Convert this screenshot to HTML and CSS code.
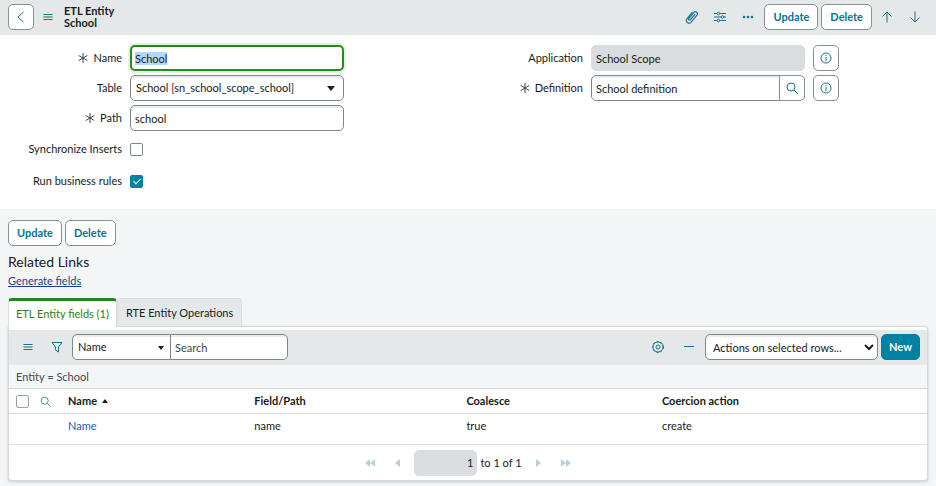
FILE: index.html
```html
<!DOCTYPE html>
<html lang="en">

<head>
  <meta charset="UTF-8">
  <meta name="viewport" content="width=device-width, initial-scale=1.0">
  <title>School | ETL Entity</title>
  <link rel="stylesheet" href="styles.css">
</head>

<body>
  <header class="form-header">
    <button class="btn btn-icon" type="button" aria-label="Back">
      <svg width="14" height="14" viewBox="0 0 14 14"><path d="M9.500 2 4 7l5.500 5" /></svg>
    </button>
    <button class="icon-btn menu-btn" type="button" aria-label="Form menu">
      <svg width="10" height="10" viewBox="0 0 10 10"><path d="M.5 2.500h9M.5 5h9M.5 7.500h9" /></svg>
    </button>
    <h1 class="form-title">ETL Entity<br>School</h1>
    <div class="header-icons">
      <button class="icon-btn" type="button" aria-label="Attachments">
        <svg width="14" height="14" viewBox="1 1 12 12"><path d="M9.700 4.500 5.500 9.400c-.7.800-2-.2-1.300-1.100L8.500 3.200c1.500-1.700 4.100.3 2.700 2.200l-4.900 5.900c-2 2.300-5.500-.4-3.700-2.800l4.700-5.600" /></svg>
      </button>
      <button class="icon-btn" type="button" aria-label="Personalize form">
        <svg width="14" height="14" viewBox="0 0 14 14"><path d="M1 3.500h3M7 3.500h6M1 7h7M11 7h2M1 10.500h3M7 10.500h6" /><circle cx="5.500" cy="3.500" r="1.300" /><circle cx="9.500" cy="7" r="1.300" /><circle cx="5.500" cy="10.500" r="1.300" /></svg>
      </button>
      <button class="icon-btn" type="button" aria-label="More options">
        <svg class="solid" width="14" height="14" viewBox="0 0 14 14"><circle cx="3" cy="7" r="1.300" /><circle cx="7" cy="7" r="1.300" /><circle cx="11" cy="7" r="1.300" /></svg>
      </button>
    </div>
    <div class="btn-group">
      <button class="btn" type="button">Update</button>
      <button class="btn" type="button">Delete</button>
    </div>
    <div class="header-nav">
      <button class="icon-btn" type="button" aria-label="Previous record">
        <svg width="14" height="14" viewBox="0 0 14 14"><path d="M7 12.500V2M2.500 6.500 7 2l4.500 4.500" /></svg>
      </button>
      <button class="icon-btn" type="button" aria-label="Next record">
        <svg width="14" height="14" viewBox="0 0 14 14"><path d="M7 1.500V12M2.500 7.500 7 12l4.500-4.500" /></svg>
      </button>
    </div>
  </header>

  <form class="record-form">
    <div class="form-column">
      <div class="field">
        <label for="name"><svg class="required" width="10" height="10" viewBox="0 0 10 10"><path d="M5 0v10M.7 2.500l8.600 5M9.300 2.500l-8.600 5" /></svg>Name</label>
        <input class="control" type="text" id="name" value="School" autofocus>
      </div>
      <div class="field">
        <label for="table">Table</label>
        <div class="select-wrap">
          <select class="control" id="table">
            <option>School [sn_school_scope_school]</option>
          </select>
        </div>
      </div>
      <div class="field">
        <label for="path"><svg class="required" width="10" height="10" viewBox="0 0 10 10"><path d="M5 0v10M.7 2.500l8.600 5M9.300 2.500l-8.600 5" /></svg>Path</label>
        <input class="control" type="text" id="path" value="school">
      </div>
      <div class="field field-check">
        <label for="sync">Synchronize Inserts</label>
        <input class="checkbox" type="checkbox" id="sync">
      </div>
      <div class="field field-check">
        <label for="rules">Run business rules</label>
        <input class="checkbox" type="checkbox" id="rules" checked>
      </div>
    </div>
    <div class="form-column">
      <div class="field">
        <label for="application">Application</label>
        <input class="control" type="text" id="application" value="School Scope" readonly>
        <button class="btn btn-icon" type="button" aria-label="Preview application">
          <svg width="14" height="14" viewBox="0 0 14 14"><circle cx="7" cy="7" r="5" /><path d="M7 6v4M7 4v1" /></svg>
        </button>
      </div>
      <div class="field">
        <label for="definition"><svg class="required" width="10" height="10" viewBox="0 0 10 10"><path d="M5 0v10M.7 2.500l8.600 5M9.300 2.500l-8.600 5" /></svg>Definition</label>
        <div class="lookup">
          <input class="control" type="text" id="definition" value="School definition">
          <button class="btn btn-icon" type="button" aria-label="Look up definition">
            <svg width="14" height="14" viewBox="0 0 14 14"><circle cx="6" cy="6" r="4" /><path d="m9 9 4 4" /></svg>
          </button>
        </div>
        <button class="btn btn-icon" type="button" aria-label="Preview definition">
          <svg width="14" height="14" viewBox="0 0 14 14"><circle cx="7" cy="7" r="5" /><path d="M7 6v4M7 4v1" /></svg>
        </button>
      </div>
    </div>
  </form>

  <main class="related">
    <div class="btn-group">
      <button class="btn" type="button">Update</button>
      <button class="btn" type="button">Delete</button>
    </div>
    <h2 class="related-title">Related Links</h2>
    <a class="related-link" href="#">Generate fields</a>

    <div class="tabs" role="tablist">
      <button class="tab active" type="button" role="tab" aria-selected="true">ETL Entity fields (1)</button>
      <button class="tab" type="button" role="tab" aria-selected="false">RTE Entity Operations</button>
    </div>

    <section class="list-panel">
      <div class="list-toolbar">
        <button class="icon-btn" type="button" aria-label="List menu">
          <svg width="10" height="10" viewBox="0 0 10 10"><path d="M.5 2.500h9M.5 5h9M.5 7.500h9" /></svg>
        </button>
        <button class="icon-btn" type="button" aria-label="Filter">
          <svg width="12" height="12" viewBox="0 0 12 12"><path d="M1 1.500h10L7.500 6v5L4.500 9V6z" /></svg>
        </button>
        <div class="search-group">
          <div class="select-wrap">
            <select class="control" aria-label="Search field">
              <option>Name</option>
            </select>
          </div>
          <input class="control" type="text" placeholder="Search" aria-label="Search">
        </div>
        <div class="toolbar-icons">
          <button class="icon-btn" type="button" aria-label="List settings">
            <svg width="14" height="14" viewBox="0 0 14 14"><circle cx="7" cy="7" r="5" /><circle class="teeth" cx="7" cy="7" r="5.500" /><circle cx="7" cy="7" r="2" /></svg>
          </button>
          <button class="icon-btn" type="button" aria-label="Collapse list">
            <svg width="12" height="12" viewBox="0 0 12 12"><path d="M1 5.500h10" /></svg>
          </button>
        </div>
        <select class="control actions" aria-label="Actions">
          <option>Actions on selected rows...</option>
        </select>
        <button class="btn btn-primary" type="button">New</button>
      </div>
      <div class="breadcrumb">Entity = School</div>
      <table class="list">
        <thead>
          <tr>
            <th class="col-check"><input class="checkbox" type="checkbox" aria-label="Select all rows"></th>
            <th class="col-search">
              <button class="icon-btn" type="button" aria-label="Search columns">
                <svg width="11" height="11" viewBox="0 0 14 14"><circle cx="6" cy="6" r="4.500" /><path d="m9.500 9.500 4 4" /></svg>
              </button>
            </th>
            <th class="col-name">Name<span class="sort-asc"></span></th>
            <th class="col-path">Field/Path</th>
            <th class="col-coalesce">Coalesce</th>
            <th>Coercion action</th>
          </tr>
        </thead>
        <tbody>
          <tr>
            <td></td>
            <td></td>
            <td><a href="#">Name</a></td>
            <td>name</td>
            <td>true</td>
            <td>create</td>
          </tr>
        </tbody>
      </table>
      <div class="pagination">
        <button class="page-btn" type="button" aria-label="First page" disabled>
          <svg width="10" height="8" viewBox="0 0 10 8"><path d="M5 0v8L0 4zM10 0v8L5 4z" /></svg>
        </button>
        <button class="page-btn" type="button" aria-label="Previous page" disabled>
          <svg width="5" height="8" viewBox="0 0 5 8"><path d="M5 0v8L0 4z" /></svg>
        </button>
        <div class="page-range">
          <input class="control" type="text" id="page" value="1" readonly>
          <label for="page">to 1 of 1</label>
        </div>
        <button class="page-btn" type="button" aria-label="Next page" disabled>
          <svg width="5" height="8" viewBox="0 0 5 8"><path d="M0 0v8l5-4z" /></svg>
        </button>
        <button class="page-btn" type="button" aria-label="Last page" disabled>
          <svg width="10" height="8" viewBox="0 0 10 8"><path d="M0 0v8l5-4zM5 0v8l5-4z" /></svg>
        </button>
      </div>
    </section>
  </main>

  <script>
    const nameInput = document.getElementById('name');
    nameInput.focus();
    nameInput.select();
  </script>
</body>

</html>
```

FILE: styles.css
```css
* {
  box-sizing: border-box;
}

body {
  margin: 0;
  background-color: #f4f5f7;
  color: #161b1c;
  font-family: Lato, sans-serif;
  font-size: 11px;
  line-height: 16px;
}

button,
input,
select {
  margin: 0;
  font: inherit;
  color: inherit;
}

button {
  cursor: pointer;
}

svg {
  display: block;
  fill: none;
  stroke: #17708d;
  stroke-width: 1;
}

svg.solid {
  fill: #17708d;
  stroke: none;
}

/* buttons */
.btn {
  height: 26px;
  padding: 0 8px;
  border: 1px solid #869093;
  border-radius: 5px;
  background-color: #fff;
  color: #0b718f;
  font-weight: bold;
}

.btn-icon {
  display: flex;
  align-items: center;
  justify-content: center;
  width: 26px;
  padding: 0;
}

.btn-primary {
  padding: 0 7px;
  border-color: #0080a3;
  background-color: #0080a3;
  color: #fff;
}

.btn-group {
  display: flex;
  gap: 3px;
}

.icon-btn {
  padding: 0;
  border: none;
  background: none;
}

/* header */
.form-header {
  display: flex;
  align-items: center;
  height: 35px;
  padding: 0 14px 1px 8px;
  background-color: #e4e8e9;
}

.menu-btn {
  margin: 0 11px 0 9px;
}

.form-title {
  margin: 0;
  font-size: 11px;
  line-height: 12px;
}

.header-icons,
.header-nav {
  display: flex;
  gap: 14px;
}

.header-icons {
  margin-left: auto;
  margin-right: 9px;
}

.header-nav {
  margin-left: 8px;
}

/* record form */
.record-form {
  display: grid;
  grid-template-columns: 1fr 1fr;
  padding: 10px 14px 14px 0;
  background-color: #fff;
}

.form-column {
  display: flex;
  flex-direction: column;
  gap: 4px;
}

.field {
  display: grid;
  grid-template-columns: 122fr 214fr 109fr;
  gap: 8px;
  align-items: center;
}

.field > label {
  display: flex;
  align-items: center;
  justify-content: flex-end;
  gap: 5px;
}

.required {
  stroke: #3c4547;
}

.field-check {
  height: 28px;
}

.control {
  width: 100%;
  height: 26px;
  padding: 0 4px;
  border: 1px solid #7c888a;
  border-radius: 5px;
  background-color: #fff;
  box-shadow: inset 0 2px 1px #e8eaeb;
}

.control:focus {
  border: 2px solid #278a1b;
  padding: 0 3px;
  outline: none;
  box-shadow: 0 0 0 2px #e3f0e2;
}

.control::selection {
  background-color: #b3d7fe;
  color: #161b1c;
}

.control::placeholder {
  color: #3f494b;
  opacity: 1;
}

.control:read-only:not(select) {
  border-color: #dadde0;
  background-color: #dadde0;
  box-shadow: none;
}

.select-wrap {
  position: relative;
}

.select-wrap select {
  appearance: none;
  padding: 0 5px;
}

.select-wrap::after {
  content: "";
  position: absolute;
  top: 11px;
  right: 9px;
  border: 4px solid transparent;
  border-top: 5px solid #161b1c;
  border-bottom: none;
  pointer-events: none;
}

.lookup {
  display: flex;
}

.lookup .control {
  border-radius: 5px 0 0 5px;
}

.lookup .btn {
  flex: none;
  margin-left: -1px;
  border-radius: 0 5px 5px 0;
}

.checkbox {
  appearance: none;
  display: block;
  width: 13px;
  height: 13px;
  border: 1px solid #7c888a;
  border-radius: 2px;
  background-color: #fff;
}

.checkbox:checked {
  border-color: #0080a3;
  background-color: #0080a3;
}

.checkbox:checked::after {
  content: "";
  display: block;
  width: 3px;
  height: 6px;
  margin: 1px 0 0 4px;
  border: solid #fff;
  border-width: 0 1px 1px 0;
  transform: rotate(45deg);
}

/* related links and lists */
.related {
  padding: 11px 8px 6px;
}

.related-title {
  margin: 7px 0 2px;
  font-size: 14px;
  font-weight: normal;
  line-height: 18px;
}

.related-link {
  display: inline-block;
  color: #1b3f8f;
}

.tabs {
  display: flex;
  align-items: flex-end;
  margin-top: 9px;
}

.tab {
  height: 28px;
  padding: 0 8px;
  border: 1px solid #dadddf;
  border-bottom: none;
  border-radius: 4px 4px 0 0;
  background-color: #e4e8e9;
}

.tab.active {
  position: relative;
  height: 29px;
  margin-bottom: -1px;
  padding: 0 7px;
  border-top: 3px solid #278224;
  background-color: #fff;
  color: #278224;
}

.list-panel {
  padding-top: 3px;
  border: 1px solid #d3d8da;
  border-radius: 0 4px 4px 4px;
  background-color: #fff;
  box-shadow: 0 1px 3px #c3c8ca;
}

.list-toolbar {
  display: flex;
  align-items: center;
  height: 35px;
  padding: 0 7px 1px 14px;
  background-color: #e4e8e9;
}

.list-toolbar .icon-btn + .icon-btn {
  margin-left: 18px;
}

.search-group {
  display: flex;
  width: 216px;
  margin-left: 9px;
}

.search-group .select-wrap {
  flex: none;
  width: 99px;
}

.search-group .select-wrap::after {
  top: 12px;
  right: 7px;
  border-width: 4px 3px 0;
}

.search-group select {
  border-radius: 5px 0 0 5px;
}

.search-group input {
  margin-left: -1px;
  border-radius: 0 5px 5px 0;
}

.toolbar-icons {
  display: flex;
  align-items: center;
  margin-left: auto;
  margin-right: 10px;
}

.teeth {
  stroke-dasharray: 2 2;
}

.actions {
  width: 173px;
  margin-right: 3px;
  padding: 0 3px;
}

.breadcrumb {
  padding: 4px 7px 3px;
  background-color: #f4f5f7;
  color: #3f494b;
}

.list {
  width: 100%;
  border-collapse: collapse;
  table-layout: fixed;
  text-align: left;
}

.list th {
  height: 25px;
  padding: 0 7px;
  border-top: 1px solid #d3d8da;
  border-bottom: 1px solid #d3d8da;
}

.list td {
  height: 31px;
  padding: 4px 7px;
  border-bottom: 1px solid #dfe3e4;
  vertical-align: top;
}

.list a {
  color: #1f56cc;
  text-decoration: none;
}

.list .checkbox {
  border-color: #9aa4a6;
}

.list .icon-btn {
  display: block;
}

.col-check {
  width: 24px;
}

.col-search {
  width: 28px;
}

.col-name {
  width: 20.3%;
}

.col-path {
  width: 23.1%;
}

.col-coalesce {
  width: 21.3%;
}

.sort-asc {
  display: inline-block;
  margin-left: 5px;
  border: 3px solid transparent;
  border-top: none;
  border-bottom: 4px solid #161b1c;
  vertical-align: 2px;
}

.pagination {
  display: flex;
  align-items: center;
  justify-content: center;
  gap: 20px;
  height: 35px;
}

.page-btn {
  padding: 0;
  border: none;
  background: none;
}

.page-btn svg {
  fill: #b5d2dc;
  stroke: none;
}

.page-range {
  display: flex;
  align-items: center;
  gap: 3px;
  margin: 0 -6px;
}

.page-range .control {
  width: 63px;
  padding: 0 3px;
  text-align: right;
}
```
